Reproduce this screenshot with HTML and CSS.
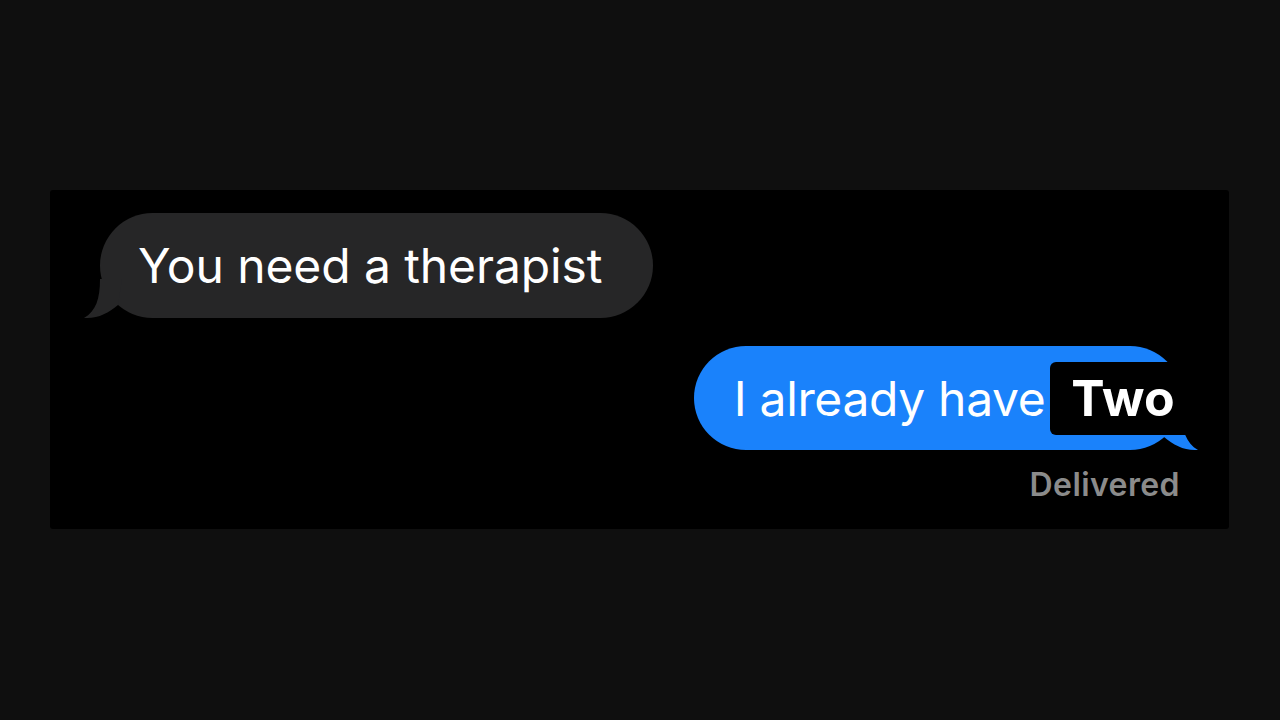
FILE: index.html
```html
<!DOCTYPE html>
<html>
<head>
<meta charset="utf-8">
<link rel="stylesheet" href="styles.css">
</head>
<body>
<div class="page">
  <div class="card">
    <div class="row row-left">
      <div class="bubble bubble-in">
        <svg class="tail tail-left" width="50" height="40" viewBox="0 0 50 40"><path d="M18 0 C18 20 14 32 2 39 C16 40 26 34 36 26 L40 0 Z" fill="#262627"/></svg>
        <span class="text">You need a therapist</span>
      </div>
    </div>
    <div class="row row-right">
      <div class="bubble bubble-out">
        <svg class="tail tail-right" width="50" height="40" viewBox="0 0 50 40"><path d="M32 0 C32 20 36 32 48 39 C34 40 24 34 14 26 L10 0 Z" fill="#1a82fb"/></svg>
        <span class="text">I already have</span>
        <span class="redact">Two</span>
      </div>
    </div>
    <div class="row row-right">
      <span class="status">Delivered</span>
    </div>
  </div>
</div>
</body>
</html>
```
FILE: styles.css
```css
html, body {
  margin: 0;
  padding: 0;
  background: #0f0f0f;
}
.page {
  padding: 190px 51px 0 50px;
  font-family: "Inter", "Noto Sans", sans-serif;
}
.card {
  background: #000;
  border-radius: 3px;
  padding: 23px 47px 26px 50px;
  display: flex;
  flex-direction: column;
}
.row {
  display: flex;
}
.row-left { justify-content: flex-start; }
.row-right { justify-content: flex-end; }
.bubble {
  position: relative;
  display: flex;
  align-items: center;
  border-radius: 53px;
  color: #fff;
  font-size: 48px;
  letter-spacing: -0.1px;
}
.bubble .text {
  position: relative;
  z-index: 1;
}
.bubble-in {
  background: #262627;
  height: 105px;
  padding: 0 51px 0 38px;
}
.bubble-out {
  background: #1a82fb;
  height: 104px;
  margin-top: 28px;
  padding: 0 0 0 40px;
  letter-spacing: -0.35px;
}
.tail {
  position: absolute;
  bottom: -1px;
}
.tail-left { left: -18px; }
.tail-right { right: -18px; }
.redact {
  position: relative;
  z-index: 2;
  background: #000;
  border-radius: 6px;
  height: 73px;
  line-height: 73px;
  padding: 0 20px 0 21px;
  margin: 0 -13px 0 5px;
  font-size: 50px;
  font-weight: 700;
  letter-spacing: 0.3px;
}
.status {
  margin-top: 17px;
  margin-right: 2px;
  font-size: 32px;
  line-height: 36px;
  font-weight: 600;
  letter-spacing: 0.4px;
  color: #8b8b8b;
}
```
